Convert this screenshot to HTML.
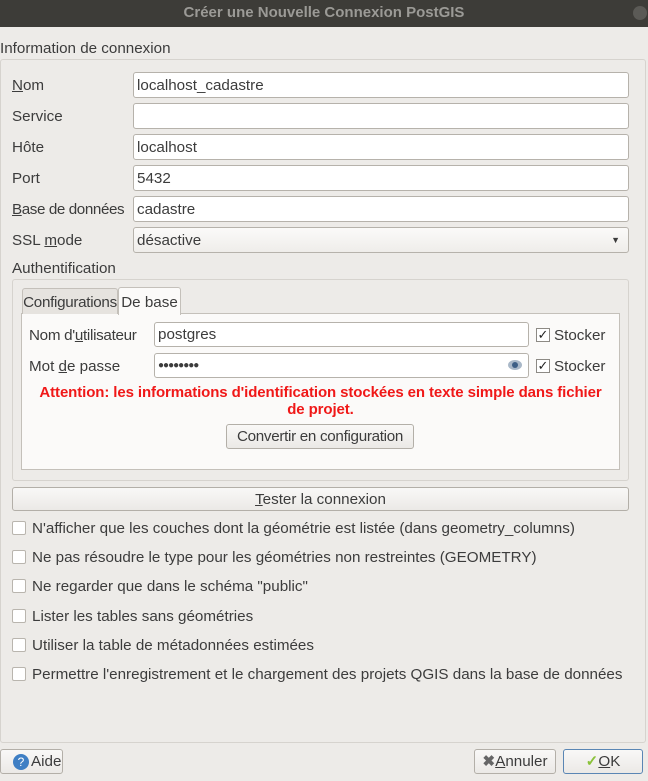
<!DOCTYPE html>
<html><head><meta charset="utf-8"><style>
*{box-sizing:border-box;margin:0;padding:0}
body{width:648px;height:781px;background:#edebe8;font-family:"Liberation Sans",sans-serif;font-size:15.2px;color:#3c3c3c;position:relative;overflow:hidden}
.a{position:absolute;white-space:nowrap}
.title{left:0;top:0;width:648px;height:27px;background:#3d3c38;color:#9b9a96;font-weight:bold;font-size:15px;text-align:center;line-height:26px}
.inp{position:absolute;background:#fff;border:1px solid #b6b2ab;border-radius:3px;padding-left:3px;line-height:25px;height:26px}
.lbl{position:absolute;left:12px;line-height:20px;margin-top:1px}
.btn{position:absolute;border:1px solid #b3afa8;border-radius:3px;background:linear-gradient(#f9f8f7,#ebe9e6);text-align:center;line-height:23px}
.cb{position:absolute;left:12px;width:14px;height:14px;border:1px solid #b9b5ae;background:#fff;border-radius:2px}
.ct{position:absolute;left:32px;line-height:20px;margin-top:1px}
.ck{position:absolute;width:14px;height:14px;border:1px solid #8d8a85;background:#fff;font-size:13px;line-height:12px;text-align:center;color:#222}
u{text-decoration:underline}
</style></head><body>
<div class="a title">Créer une Nouvelle Connexion PostGIS</div>
<div class="a" style="left:633px;top:6px;width:14px;height:14px;border-radius:7px;background:#5b5a56"></div>
<div class="a" style="left:0;top:39px;line-height:20px">Information de connexion</div>
<div class="a" style="left:0;top:59px;width:646px;height:684px;border:1px solid #d6d3ce;border-radius:3px"></div>

<div class="lbl" style="top:75px"><u>N</u>om</div><div class="inp" style="left:133px;top:72px;width:496px">localhost_cadastre</div>
<div class="lbl" style="top:106px">Service</div><div class="inp" style="left:133px;top:103px;width:496px"></div>
<div class="lbl" style="top:137px">Hôte</div><div class="inp" style="left:133px;top:134px;width:496px">localhost</div>
<div class="lbl" style="top:168px">Port</div><div class="inp" style="left:133px;top:165px;width:496px">5432</div>
<div class="lbl" style="top:199px;letter-spacing:-0.4px"><u>B</u>ase de données</div><div class="inp" style="left:133px;top:196px;width:496px">cadastre</div>
<div class="lbl" style="top:230px">SSL <u>m</u>ode</div><div class="inp" style="left:133px;top:227px;width:496px;background:linear-gradient(#fbfaf9,#efedea)">désactive<span style="position:absolute;right:8px;top:0;font-size:9px">▼</span></div>

<div class="lbl" style="top:258px">Authentification</div>
<div class="a" style="left:12px;top:279px;width:617px;height:202px;border:1px solid #d6d3ce;border-radius:3px"></div>
<div class="a" style="left:21px;top:313px;width:599px;height:157px;border:1px solid #c4c0ba;background:#fbfaf9"></div>
<div class="a" style="left:22px;top:288px;width:96px;height:26px;border:1px solid #c4c0ba;border-bottom:none;border-radius:3px 3px 0 0;background:#e6e3df;line-height:27px;text-align:center;letter-spacing:-0.3px">Configurations</div>
<div class="a" style="left:118px;top:287px;width:63px;height:28px;border:1px solid #c4c0ba;border-bottom:none;border-radius:3px 3px 0 0;background:#fbfaf9;line-height:29px;text-align:center">De base</div>
<div class="a" style="left:29px;top:326px;line-height:20px;letter-spacing:-0.3px">Nom d'<u>u</u>tilisateur</div>
<div class="inp" style="left:154px;top:322px;width:375px;height:25px;line-height:24px">postgres</div>
<div class="ck" style="left:536px;top:328px">✓</div><div class="a" style="left:554px;top:326px;line-height:20px">Stocker</div>
<div class="a" style="left:29px;top:357px;line-height:20px">Mot <u>d</u>e passe</div>
<div class="inp" style="left:154px;top:353px;width:375px;height:25px;line-height:23px;font-size:10px;letter-spacing:-1px">●●●●●●●●<span style="position:absolute;right:6px;top:6px;width:14px;height:10px;border-radius:50%;background:#a9b8c8;display:block"><span style="position:absolute;left:4px;top:2px;width:6px;height:6px;border-radius:3px;background:#3d5f86;display:block"></span></span></div>
<div class="ck" style="left:536px;top:359px">✓</div><div class="a" style="left:554px;top:357px;line-height:20px">Stocker</div>
<div class="a" style="left:21px;width:599px;top:384px;text-align:center;color:#f01818;font-weight:bold;font-size:15px;line-height:17px;white-space:normal;letter-spacing:-0.1px">Attention: les informations d'identification stockées en texte simple dans fichier<br>de projet.</div>
<div class="btn" style="left:226px;top:424px;width:188px;height:25px;letter-spacing:-0.3px">Convertir en configuration</div>

<div class="btn" style="left:12px;top:487px;width:617px;height:24px"><u>T</u>ester la connexion</div>
<div class="cb" style="top:521px"></div><div class="ct" style="top:518px">N'afficher que les couches dont la géométrie est listée (dans geometry_columns)</div>
<div class="cb" style="top:550px"></div><div class="ct" style="top:547px">Ne pas résoudre le type pour les géométries non restreintes (GEOMETRY)</div>
<div class="cb" style="top:579px"></div><div class="ct" style="top:576px">Ne regarder que dans le schéma "public"</div>
<div class="cb" style="top:609px"></div><div class="ct" style="top:606px">Lister les tables sans géométries</div>
<div class="cb" style="top:638px"></div><div class="ct" style="top:635px">Utiliser la table de métadonnées estimées</div>
<div class="cb" style="top:667px"></div><div class="ct" style="top:664px">Permettre l'enregistrement et le chargement des projets QGIS dans la base de données</div>

<div class="btn" style="left:0;top:749px;width:63px;height:25px"><span style="position:absolute;left:12px;top:4px;width:16px;height:16px;border-radius:8px;background:#3f7fc4;color:#fff;font-size:12px;line-height:16px;text-align:center">?</span><span style="position:absolute;left:30px;top:0">Aide</span></div>
<div class="btn" style="left:474px;top:749px;width:82px;height:25px"><span style="color:#666;font-weight:bold">✖</span><u>A</u>nnuler</div>
<div class="btn" style="left:563px;top:749px;width:80px;height:25px;border-color:#5a86b4"><span style="color:#8ac23a;font-weight:bold">✓</span><u>O</u>K</div>
</body></html>
